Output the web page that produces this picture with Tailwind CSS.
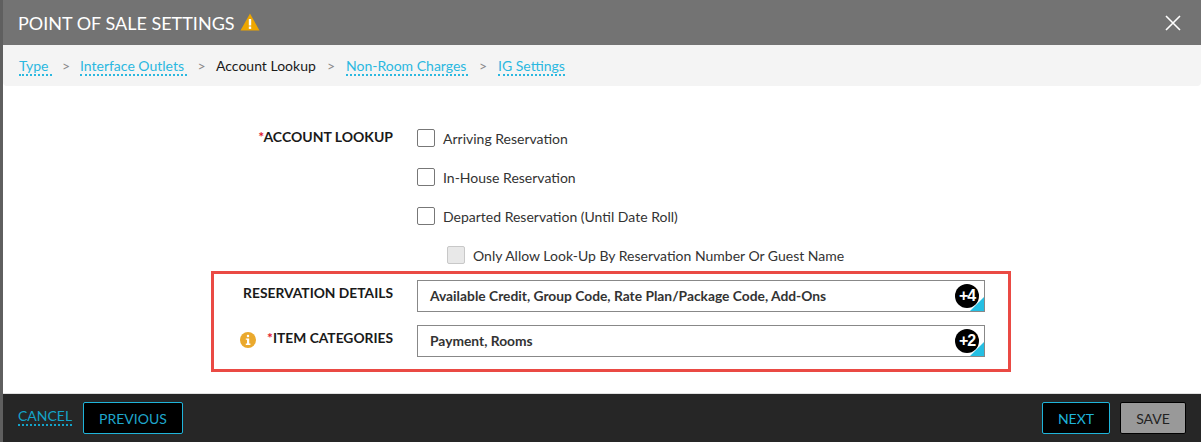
<!doctype html>
<html lang="en">
<head>
<meta charset="UTF-8">
<title>Point of Sale Settings</title>
<script src="https://cdn.jsdelivr.net/npm/@tailwindcss/browser@4"></script>
</head>
<body class="font-['Lato','Open_Sans',sans-serif] bg-white">
<div class="relative w-[1201px] h-[442px] overflow-hidden flex flex-col pl-[3px] bg-white">
    <div class="absolute left-0 top-0 w-[3px] h-full bg-[#5f5f5f]"></div>

    <!-- header -->
    <header class="h-[45px] -ml-[3px] pl-[18px] pr-[20px] bg-[#737373] flex items-center justify-between text-white">
        <div class="flex items-center gap-[5px]">
            <span class="text-[18px] leading-none">POINT OF SALE SETTINGS</span>
            <svg width="20" height="18" viewBox="0 0 20 18" class="-mt-[2px]">
                <path d="M10 0.5 L19.5 17.5 L0.5 17.5 Z" fill="#eda600"/>
                <rect x="8.8" y="6" width="2.4" height="6.5" fill="#fff"/>
                <rect x="8.8" y="13.5" width="2.4" height="2.4" fill="#fff"/>
            </svg>
        </div>
        <svg width="16" height="16" viewBox="0 0 16 16" fill="none" stroke="#fff" stroke-width="1.6"><path d="M1 1 L15 15 M15 1 L1 15"/></svg>
    </header>

    <!-- steps -->
    <nav class="h-[41px] bg-[#f4f4f4] rounded-b-[4px] pl-[16px] pt-[4px] flex items-center text-[14px] leading-none whitespace-nowrap">
        <a class="text-[#2bb8e0] border-b-2 border-dotted border-[#2bb8e0] pb-[1px] w-[33px]">Type</a>
        <span class="w-[28px] text-center text-[#8a8a8a] text-[14px] -mt-[3px]">&gt;</span>
        <a class="text-[#2bb8e0] border-b-2 border-dotted border-[#2bb8e0] pb-[1px] w-[107px]">Interface Outlets</a>
        <span class="w-[29px] text-center text-[#8a8a8a] text-[14px] -mt-[3px]">&gt;</span>
        <span class="text-[#1a1a1a] pb-[3px] w-[100px]">Account Lookup</span>
        <span class="w-[30px] text-center text-[#8a8a8a] text-[14px] -mt-[3px]">&gt;</span>
        <a class="text-[#2bb8e0] border-b-2 border-dotted border-[#2bb8e0] pb-[1px] w-[122px]">Non-Room Charges</a>
        <span class="w-[30px] text-center text-[#8a8a8a] text-[14px] -mt-[3px]">&gt;</span>
        <a class="text-[#2bb8e0] border-b-2 border-dotted border-[#2bb8e0] pb-[1px] w-[67px]">IG Settings</a>
    </nav>

    <!-- form -->
    <main class="flex-1 pt-[43px] text-[#333] text-[14px]">
        <div class="flex">
            <div class="w-[390px] text-right font-bold text-[14px] text-[#1a1a1a] leading-[16px]"><span class="text-[#e0182d]">*</span>ACCOUNT LOOKUP</div>
            <div class="ml-[24px] flex flex-col gap-[21px]">
                <label class="flex items-center h-[18px]"><span class="w-[18px] h-[18px] bg-white border border-[#777] rounded-[2px] mr-[8px]"></span>Arriving Reservation</label>
                <label class="flex items-center h-[18px]"><span class="w-[18px] h-[18px] bg-white border border-[#777] rounded-[2px] mr-[8px]"></span>In-House Reservation</label>
                <label class="flex items-center h-[18px]"><span class="w-[18px] h-[18px] bg-white border border-[#777] rounded-[2px] mr-[8px]"></span>Departed Reservation (Until Date Roll)</label>
                <label class="flex items-center h-[18px] ml-[30px]"><span class="w-[18px] h-[18px] bg-[#e8e8e8] border border-[#c8c8c8] rounded-[2px] mr-[8px]"></span>Only Allow Look-Up By Reservation Number Or Guest Name</label>
            </div>
        </div>

        <div class="flex mt-[16px]">
            <div class="w-[390px] text-right font-bold text-[13.8px] text-[#1a1a1a] leading-[16px] pt-[5px]">RESERVATION DETAILS</div>
            <div class="relative ml-[24px] w-[568px] h-[32px] border border-[#888] pl-[12px] flex items-center font-bold text-[13.8px] overflow-hidden">
                Available Credit, Group Code, Rate Plan/Package Code, Add-Ons
                <span class="absolute right-0 bottom-0 w-0 h-0 border-l-[14px] border-l-transparent border-b-[14px] border-b-[#25bfe3]"></span>
                <span class="absolute right-[5px] top-[3px] w-[24px] h-[24px] rounded-full bg-black text-white text-[16px] tracking-[-1px] font-bold flex items-center justify-center font-['Liberation_Sans',sans-serif]">+4</span>
            </div>
        </div>

        <div class="flex mt-[13px]">
            <div class="w-[390px] flex justify-end items-start font-bold text-[13.8px] text-[#1a1a1a] leading-[16px] pt-[5px]">
                <svg width="16" height="16" viewBox="0 0 16 16" class="mr-[11px] mt-[2px]">
                    <circle cx="8" cy="8" r="8" fill="#eaa92d"/>
                    <rect x="6.8" y="2.8" width="2.4" height="2.4" rx="1" fill="#fff"/>
                    <path d="M5.8 6.4 H9.2 V11.6 H10.4 V13 H5.8 V11.6 H7 V7.8 H5.8 Z" fill="#fff"/>
                </svg>
                <span><span class="text-[#e0182d]">*</span>ITEM CATEGORIES</span>
            </div>
            <div class="relative ml-[24px] w-[568px] h-[32px] border border-[#888] pl-[12px] flex items-center font-bold text-[13.8px] overflow-hidden">
                Payment, Rooms
                <span class="absolute right-0 bottom-0 w-0 h-0 border-l-[14px] border-l-transparent border-b-[14px] border-b-[#25bfe3]"></span>
                <span class="absolute right-[5px] top-[3px] w-[24px] h-[24px] rounded-full bg-black text-white text-[16px] tracking-[-1px] font-bold flex items-center justify-center font-['Liberation_Sans',sans-serif]">+2</span>
            </div>
        </div>
    </main>

    <!-- footer -->
    <footer class="h-[49px] -ml-[3px] pl-[18px] pr-[15px] bg-[#262626] border-t border-[#e0e0e0] flex items-center justify-between text-[14px]">
        <div class="flex items-center">
            <a class="text-[#13a3c9] border-b-2 border-dotted border-[#13a3c9] leading-[17px] w-[54px] -mt-[4px]">CANCEL</a>
            <button class="ml-[11px] w-[100px] h-[32px] bg-black border border-[#1fb4da] rounded-[2px] text-[#1fa7cc]">PREVIOUS</button>
        </div>
        <div class="flex items-center gap-[10px]">
            <button class="w-[68px] h-[32px] bg-black border border-[#1fb4da] rounded-[2px] text-[#1fb4da]">NEXT</button>
            <button class="w-[66px] h-[32px] bg-[#999] border border-black rounded-[2px] text-[#222]">SAVE</button>
        </div>
    </footer>

    <!-- highlight drawn over the screenshot -->
    <div class="absolute left-[211px] top-[271px] w-[800px] h-[101px] border-[3px] border-[#ea4a44]"></div>
</div>
</body>
</html>
